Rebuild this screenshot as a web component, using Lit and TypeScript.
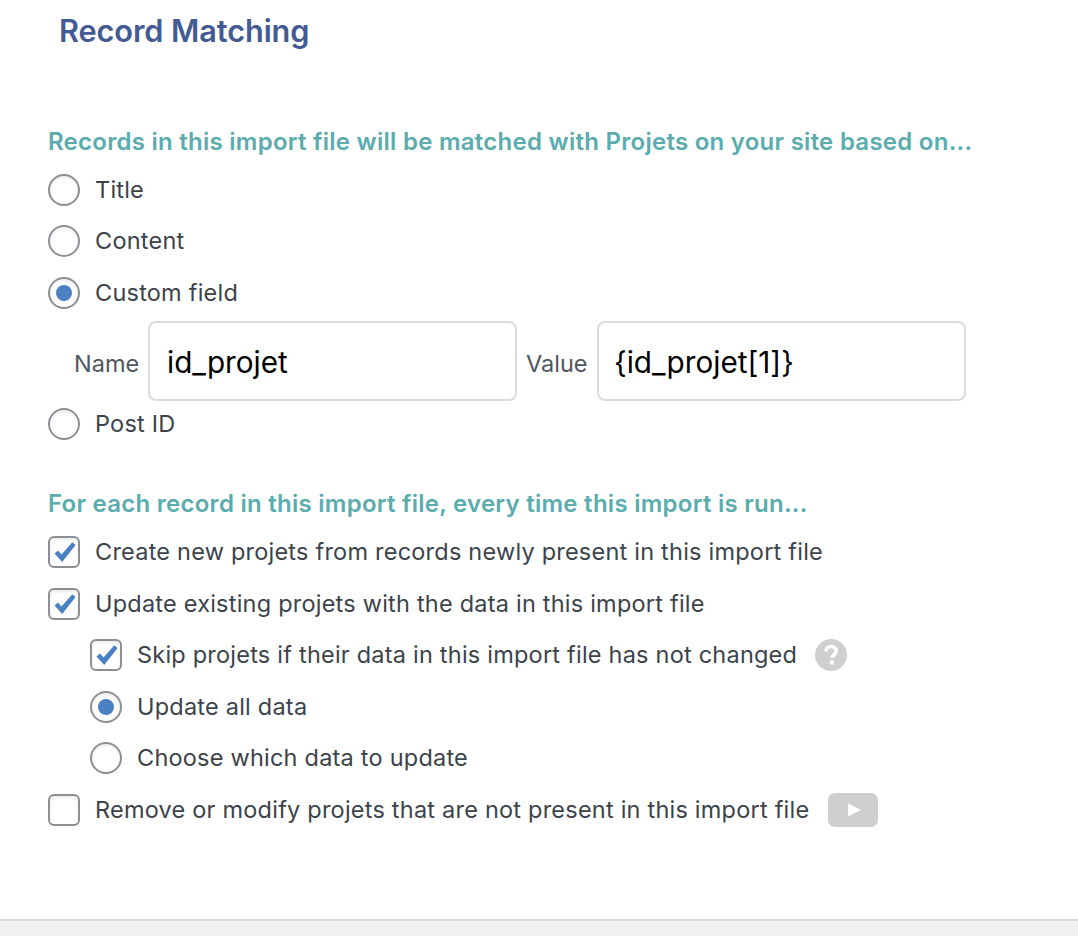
import { LitElement, html, css } from "lit";
import { customElement } from "lit/decorators.js";

const check = html`<svg class="tick" viewBox="0 0 32 32"><path d="M6.5 17.5 L10 14.4 L13.5 18.6 L24.3 6.3 L27.6 9 L14.2 26 Z" fill="#4a80c4"/></svg>`;

@customElement("app-root")
export class AppRoot extends LitElement {
  static styles = css`
    :host { display: block; width: 1078px; height: 936px; background: #f0f0f0; font-family: Inter, "Liberation Sans", sans-serif; color: #3c434a; overflow: hidden; }
    .panel { box-sizing: border-box; height: 921px; background: #fff; border-bottom: 2px solid #dcdcdc; padding: 12px 0 0 48px; }
    h2 { margin: 0 0 0 11px; font-size: 30.7px; line-height: 38px; font-weight: 600; color: #435a93; letter-spacing: -0.1px; }
    h3 { margin: 0; font-size: 24px; line-height: 30px; font-weight: 600; color: #5aacad; letter-spacing: 0.26px; }
    .first { margin-top: 77px; margin-bottom: 6.75px; }
    .second { margin-top: 39.25px; margin-bottom: 7.25px; }
    .row { display: flex; align-items: center; height: 51.5px; font-size: 23.5px; line-height: 27px; letter-spacing: 0.22px; gap: 15px; white-space: nowrap; }
    .row > .txt { position: relative; top: -0.5px; }
    .sub { padding-left: 42px; }
    .radio, .box { box-sizing: border-box; width: 32px; height: 32px; border: 2px solid #8c8f94; background: #fff; flex: none; display: flex; align-items: center; justify-content: center; box-shadow: inset 0 2px 3px rgba(0,0,0,.08); }
    .radio { border-radius: 50%; }
    .box { border-radius: 6px; }
    .dot { width: 16px; height: 16px; border-radius: 50%; background: #4a80c4; }
    .tick { width: 32px; height: 32px; display: block; flex: none; margin: -2px; }
    .fields { display: flex; align-items: center; height: 80px; margin: 3px 0 -3px 26px; font-size: 23.5px; color: #50575e; }
    .lbl { padding-top: 5px; }
    .lbl-name { width: 74px; }
    .lbl-value { margin-left: 9px; width: 71px; }
    .input { box-sizing: border-box; width: 369px; height: 80px; border: 2px solid #dcdcdc; border-radius: 8px; padding: 2px 0 0 17px; font-size: 29.7px; color: #000; display: flex; align-items: center; letter-spacing: 0; }
    .input.value { padding-left: 15px; }
    .help { width: 32px; height: 32px; margin-left: 3px; flex: none; display: block; }
    .video { width: 50px; height: 34px; margin-left: 4px; flex: none; display: block; }
  `;

  render() {
    return html`<div class="panel">
      <h2>Record Matching</h2>
      <h3 class="first">Records in this import file will be matched with Projets on your site based on...</h3>
      <div class="row"><span class="radio"></span><span class="txt">Title</span></div>
      <div class="row"><span class="radio"></span><span class="txt">Content</span></div>
      <div class="row"><span class="radio"><span class="dot"></span></span><span class="txt">Custom field</span></div>
      <div class="fields">
        <span class="lbl lbl-name">Name</span><div class="input">id_projet</div>
        <span class="lbl lbl-value">Value</span><div class="input value">{id_projet[1]}</div>
      </div>
      <div class="row"><span class="radio"></span><span class="txt">Post ID</span></div>
      <h3 class="second">For each record in this import file, every time this import is run...</h3>
      <div class="row"><span class="box">${check}</span><span class="txt">Create new projets from records newly present in this import file</span></div>
      <div class="row"><span class="box">${check}</span><span class="txt">Update existing projets with the data in this import file</span></div>
      <div class="row sub"><span class="box">${check}</span><span class="txt">Skip projets if their data in this import file has not changed</span>
        <svg class="help" viewBox="0 0 32 32"><circle cx="16" cy="16" r="16" fill="#cfcfcf"/><path d="M11 12.5c0-3 2.2-5 5.2-5s5 1.8 5 4.4c0 3.6-4.2 3.7-4.2 7.1" fill="none" stroke="#fff" stroke-width="3.6"/><rect x="14.9" y="21.5" width="4" height="4" fill="#fff"/></svg>
      </div>
      <div class="row sub"><span class="radio"><span class="dot"></span></span><span class="txt">Update all data</span></div>
      <div class="row sub"><span class="radio"></span><span class="txt">Choose which data to update</span></div>
      <div class="row"><span class="box"></span><span class="txt">Remove or modify projets that are not present in this import file</span>
        <svg class="video" viewBox="0 0 50 34"><rect width="50" height="34" rx="7" fill="#cfcfcf"/><path d="M20 10.5 L33 17 L20 23.5 Z" fill="#fff"/></svg>
      </div>
    </div>`;
  }
}
